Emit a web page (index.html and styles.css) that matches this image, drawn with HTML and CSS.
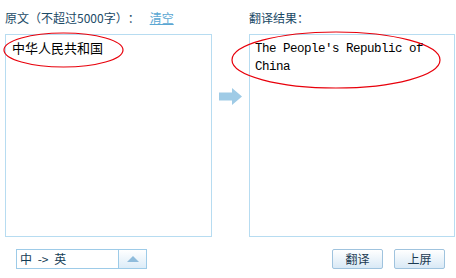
FILE: index.html
```html
<!DOCTYPE html>
<html>
<head>
<meta charset="utf-8">
<link rel="stylesheet" href="styles.css">
</head>
<body>
<div class="page">
  <div class="panes">
    <div class="col col-left">
      <div class="head">原文<span class="paren">（</span>不超过5000字<span class="paren">）</span>：<a class="clear">清空</a></div>
      <div class="box box-src">中华人民共和国</div>
    </div>
    <div class="mid">
      <svg width="24" height="17" viewBox="0 0 24 17"><path d="M0 4.5h13V0l10 8.5-10 8.5v-4.5H0z" fill="#9fcbe6"/></svg>
    </div>
    <div class="col col-right">
      <div class="head">翻译结果：</div>
      <div class="box box-out">The People's Republic of China</div>
    </div>
  </div>
  <div class="bar">
    <div class="select">
      <span class="sel-text">中 -&gt; 英</span>
      <span class="sel-btn"><svg width="12" height="6" viewBox="0 0 12 6"><path d="M0 6L6 0l6 6z" fill="#8fbcdc"/></svg></span>
    </div>
    <div class="btns">
      <button class="btn">翻译</button>
      <button class="btn">上屏</button>
    </div>
  </div>
  <svg class="marks" width="456" height="278" viewBox="0 0 456 278">
    <ellipse cx="63.5" cy="50" rx="59.5" ry="17" fill="none" stroke="#e8000b" stroke-width="1.2"/>
    <ellipse cx="336" cy="60" rx="104" ry="28" fill="none" stroke="#e8000b" stroke-width="1.2"/>
  </svg>
</div>
</body>
</html>
```

FILE: styles.css
```css
html, body {
  margin: 0;
  padding: 0;
  background: #fff;
}
.page {
  position: relative;
  width: 456px;
  height: 278px;
  font-family: "Noto Sans CJK SC", "Liberation Sans", sans-serif;
  font-size: 12px;
  color: #1b4a66;
}
.panes {
  display: flex;
  padding-left: 5px;
}
.col {
  display: flex;
  flex-direction: column;
}
.col-left { width: 207px; }
.col-right { width: 206px; }
.head {
  height: 34px;
  line-height: 36px;
  font-size: 12px;
  white-space: nowrap;
  color: #1b4a66;
}
.paren {
  display: inline-block;
  width: 12px;
  text-align: center;
}
.clear {
  margin-left: 10px;
  color: #5aa7d3;
  text-decoration: underline;
}
.box {
  box-sizing: border-box;
  height: 203px;
  border: 1px solid #b7dcf1;
  color: #000;
}
.box-src {
  padding: 4px 6px;
  font-size: 13px;
  line-height: 18px;
}
.box-out {
  padding: 5px 5px;
  font-family: "Liberation Mono", monospace;
  font-size: 12.5px;
  letter-spacing: -0.5px;
  line-height: 18px;
}
.mid {
  width: 37px;
  display: flex;
  padding-left: 7px;
  padding-top: 88px;
  box-sizing: border-box;
}
.mid svg { display: block; }
.bar {
  display: flex;
  justify-content: space-between;
  padding: 12px 11px 0 16px;
}
.select {
  box-sizing: border-box;
  width: 131px;
  height: 20px;
  border: 1px solid #9dcbe8;
  display: flex;
}
.sel-text {
  flex: 1;
  padding-left: 3px;
  line-height: 18px;
  font-size: 12px;
  word-spacing: 3px;
  color: #133c55;
  white-space: pre;
}
.sel-btn {
  width: 27px;
  border-left: 1px solid #9dcbe8;
  background: linear-gradient(#ffffff, #dcecf8);
  display: flex;
  align-items: center;
  justify-content: center;
}
.sel-btn svg { display: block; }
.btns {
  display: flex;
  gap: 11px;
}
.btn {
  box-sizing: border-box;
  width: 51px;
  height: 20px;
  padding: 0;
  border: 1px solid #9fc3de;
  border-radius: 2px;
  background: linear-gradient(#ffffff, #d9e9f6);
  font-family: "Noto Sans CJK SC", sans-serif;
  font-size: 12px;
  line-height: 18px;
  color: #1a3a52;
}
.marks {
  position: absolute;
  left: 0;
  top: 0;
  pointer-events: none;
}
```
